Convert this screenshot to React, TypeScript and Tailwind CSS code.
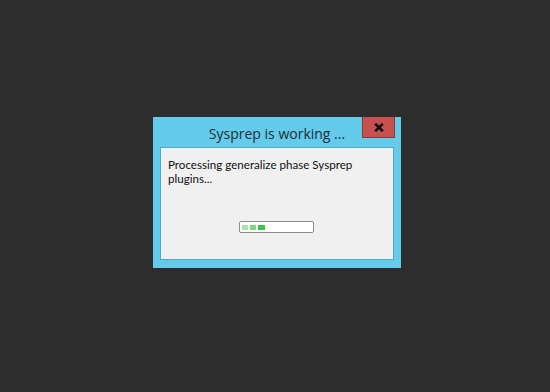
import React from "react";

export default function App() {
  return (
    <div className="w-[550px] h-[392px] bg-[#2d2d2d] pl-[153px] pt-[117px]" style={{ fontFamily: '"Open Sans", "Noto Sans", sans-serif' }}>
      <div className="relative w-[248px] h-[151px] bg-[#64cbea] flex flex-col px-[7px] pb-[8px]">
        <div className="h-[30px] -mx-[7px] flex items-center justify-center pt-[2px] text-[14px] text-[#1a2d36]">
          Sysprep is working ...
        </div>
        <div className="absolute right-[6px] top-0 w-[33px] h-[21px] bg-[#c75050] border border-[#8a3a3a] border-t-0 flex items-center justify-center">
          <svg width="10" height="9" viewBox="0 0 10 9">
            <path d="M1.2 0.8 L8.8 8.2 M8.8 0.8 L1.2 8.2" stroke="#111" strokeWidth="2.6" />
          </svg>
        </div>
        <div className="flex-1 bg-[#f0f0f0] border border-[#4fa9c6] flex flex-col">
          <div className="pl-[7px] pt-[10px] text-[11.6px] leading-[14px] text-[#111]" style={{ fontFamily: 'Lato, "Open Sans", sans-serif' }}>
            Processing generalize phase Sysprep
            <br />
            plugins...
          </div>
          <div className="pl-[78px] pt-[35px]">
            <div className="w-[75px] h-[12px] rounded-[2px] border border-[#8c8c8c] bg-white flex items-center gap-[2px] px-[2px]">
              <div className="w-[6px] h-[5px] bg-[#a9e3ad]" />
              <div className="w-[6px] h-[5px] bg-[#7bd67f]" />
              <div className="w-[7px] h-[5px] bg-[#43c24a]" />
            </div>
          </div>
        </div>
      </div>
    </div>
  );
}
